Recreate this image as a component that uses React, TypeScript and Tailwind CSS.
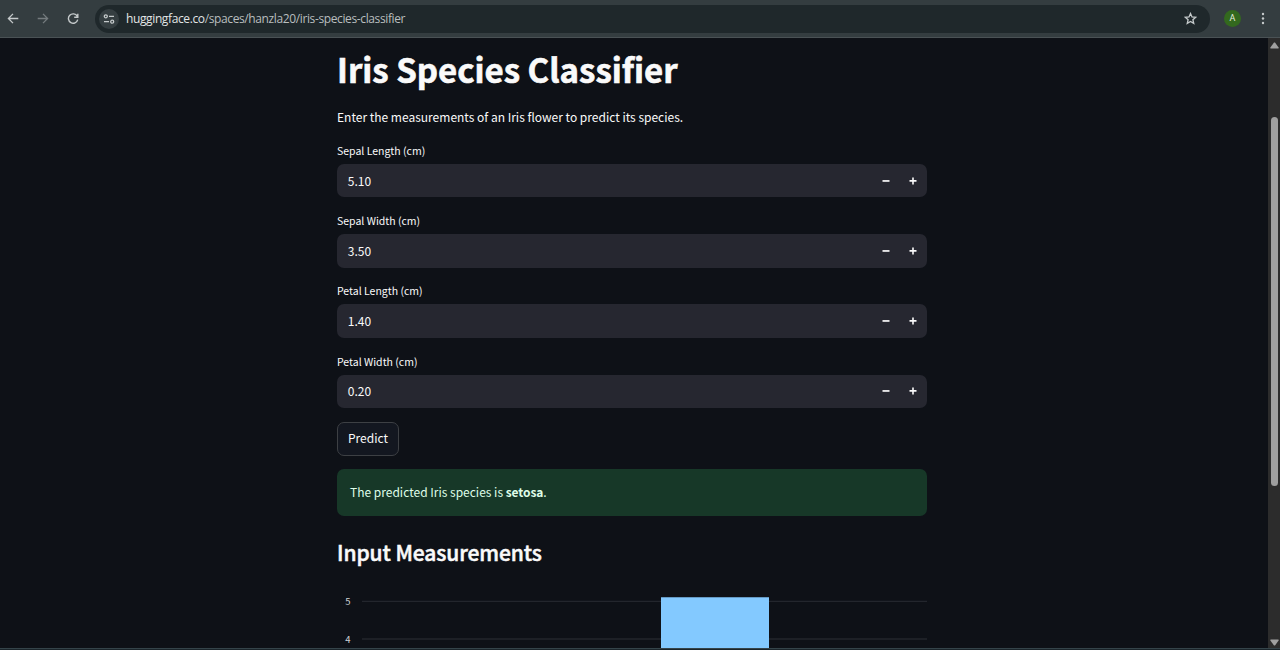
const FIELDS = [
  { label: "Sepal Length (cm)", value: "5.10" },
  { label: "Sepal Width (cm)", value: "3.50" },
  { label: "Petal Length (cm)", value: "1.40" },
  { label: "Petal Width (cm)", value: "0.20" },
];

function Toolbar() {
  return (
    <header className="flex h-[38px] shrink-0 items-center border-b border-[#4a5255] bg-[#343d40] text-[#c5cacb]">
      <svg className="ml-[7px] h-3 w-3" viewBox="0 0 12 12" fill="none" stroke="currentColor" strokeWidth="1.3">
        <path d="M11.3 5.500H1.6M6 .9 1.4 5.500 6 10.100" />
      </svg>
      <svg className="ml-[18px] h-3 w-3 text-[#747b7e]" viewBox="0 0 12 12" fill="none" stroke="currentColor" strokeWidth="1.3">
        <path d="M.7 5.500h9.7M6 .9 10.6 5.500 6 10.100" />
      </svg>
      <svg className="ml-[18px] h-3 w-3" viewBox="0 0 12 12" fill="none" stroke="currentColor" strokeWidth="1.4">
        <path d="M10.2 3.2A4.7 4.7 0 1 0 10.7 6.6M10.8.8v3.5H7.2" />
      </svg>
      <div className="ml-[16px] flex h-[28px] w-[1115px] items-center rounded-full bg-[#1f282b] pl-[4px] pr-[13px]">
        <span className="flex h-[20px] w-[20px] items-center justify-center rounded-full bg-[#353e41]">
          <svg className="h-3 w-3" viewBox="0 0 12 12" fill="none" stroke="currentColor" strokeWidth="1.3">
            <circle cx="2.8" cy="3.3" r="1.5" />
            <path d="M6 3.3h5M1 8.7h5" />
            <circle cx="9.2" cy="8.7" r="1.5" />
          </svg>
        </span>
        <span className="ml-[7px] font-['Open_Sans',sans-serif] text-[12px] tracking-[-0.38px] text-[#b9bebf]">
          <span className="text-[#e2e5e5]">huggingface.co</span>/spaces/hanzla20/iris-species-classifier
        </span>
        <svg className="ml-auto h-[13px] w-[13px]" viewBox="0 0 13 13" fill="none" stroke="currentColor" strokeWidth="1.3" strokeLinejoin="miter">
          <path d="m6.5 1.5 1.5 3.4 3.7.35-2.8 2.45.85 3.6L6.5 9.4l-3.25 1.9.85-3.6L1.3 5.25 5 4.9Z" />
        </svg>
      </div>
      <span className="ml-[14px] flex h-[17px] w-[17px] items-center justify-center rounded-full bg-[#33691e] font-['Roboto',sans-serif] text-[9px] leading-none text-[#e4eedf]">A</span>
      <svg className="ml-[19.5px] h-[14px] w-[4px]" viewBox="0 0 4 14" fill="currentColor">
        <circle cx="2" cy="2" r="1.2" />
        <circle cx="2" cy="6.5" r="1.2" />
        <circle cx="2" cy="11" r="1.2" />
      </svg>
    </header>
  );
}

function NumberField({ label, value }: { label: string; value: string }) {
  return (
    <div className="mb-[13.6px] h-[56.7px]">
      <div className="flex h-[23.2px] items-center pb-[3px] text-[10.5px]">{label}</div>
      <div className="flex h-[33.5px] items-center rounded-[7px] bg-[#262730] pl-[10.8px] pr-[10px] text-[12px]">
        <span className="flex-1">{value}</span>
        <svg className="h-2 w-2" viewBox="0 0 8 8" fill="currentColor"><path d="M.5 3.1h7v1.7h-7z" /></svg>
        <svg className="ml-[19px] h-2 w-2" viewBox="0 0 8 8" fill="currentColor"><path d="M.5 3.1h2.7V.5h1.6v2.6h2.7v1.7H4.8v2.7H3.2V4.8H.5z" /></svg>
      </div>
    </div>
  );
}

function Chart() {
  return (
    <svg className="mt-[15px] block h-[66px] w-[590px] font-['Noto_Sans_CJK_SC',sans-serif]" viewBox="0 0 590 66">
      <g fill="#d0d1d5" fontSize="9.5" textAnchor="end">
        <text x="13.5" y="20">5</text>
        <text x="13.5" y="57.5">4</text>
      </g>
      <path d="M25 16.300h565M25 54h565" stroke="#23262d" strokeWidth="1.3" />
      <path d="M324 12.300h108V66H324z" fill="#83c9ff" />
    </svg>
  );
}

function Scrollbar() {
  return (
    <div className="flex w-[12px] flex-col items-center bg-[#2c2c2c] text-[#a0a0a0]">
      <svg className="mt-[4px] h-[7px] w-[9px]" viewBox="0 0 9 7" fill="currentColor"><path d="M4 .5h1l3.8 5.2-.4.8H.6L.2 5.700z" /></svg>
      <div className="mt-[68px] h-[369px] w-[7px] rounded-full bg-[#9f9f9f]" />
      <svg className="mt-auto mb-[2px] h-[7px] w-[9px]" viewBox="0 0 9 7" fill="currentColor"><path d="M4 6.500h1L8.800 1.300 8.400.5H.6l-.4.8z" /></svg>
    </div>
  );
}

export default function App() {
  return (
    <div className="flex h-[650px] w-[1280px] flex-col overflow-hidden bg-[#0e1117] font-['Noto_Sans_CJK_SC',sans-serif] text-[#fafafa]">
      <Toolbar />
      <div className="flex min-h-0 flex-1">
        <main className="flex-1 overflow-hidden pl-[337px]">
          <div className="w-[589.5px]">
            <h1 className="mt-[9px] h-[44px] text-[33px] leading-[44px] font-bold [-webkit-text-stroke:0.6px_#fafafa]">Iris Species Classifier</h1>
            <p className="mt-[16px] h-[20px] text-[12px] leading-[20px]">Enter the measurements of an Iris flower to predict its species.</p>
            <div className="mt-[13.7px]">{FIELDS.map((f) => <NumberField key={f.label} {...f} />)}</div>
            <button className="flex h-[34px] w-[62px] items-center justify-center rounded-[7px] border border-[#3d4044] bg-[#131720] pb-[2px] text-[12px]">Predict</button>
            <div className="mt-[13px] flex h-[47px] items-center rounded-[7px] bg-[#173828] pb-px pl-[13px] text-[12px] text-[#dffde9]">
              <p>The predicted Iris species is <b className="tracking-[-0.08px]">setosa</b>.</p>
            </div>
            <h2 className="mt-[18px] h-[36px] text-[21px] leading-[36px] font-medium tracking-[-0.08px] [-webkit-text-stroke:0.5px_#fafafa]">Input Measurements</h2>
            <Chart />
          </div>
        </main>
        <Scrollbar />
      </div>
      <div className="h-[2px] shrink-0 border-t border-[#35444a] bg-[#1a252b]" />
    </div>
  );
}
